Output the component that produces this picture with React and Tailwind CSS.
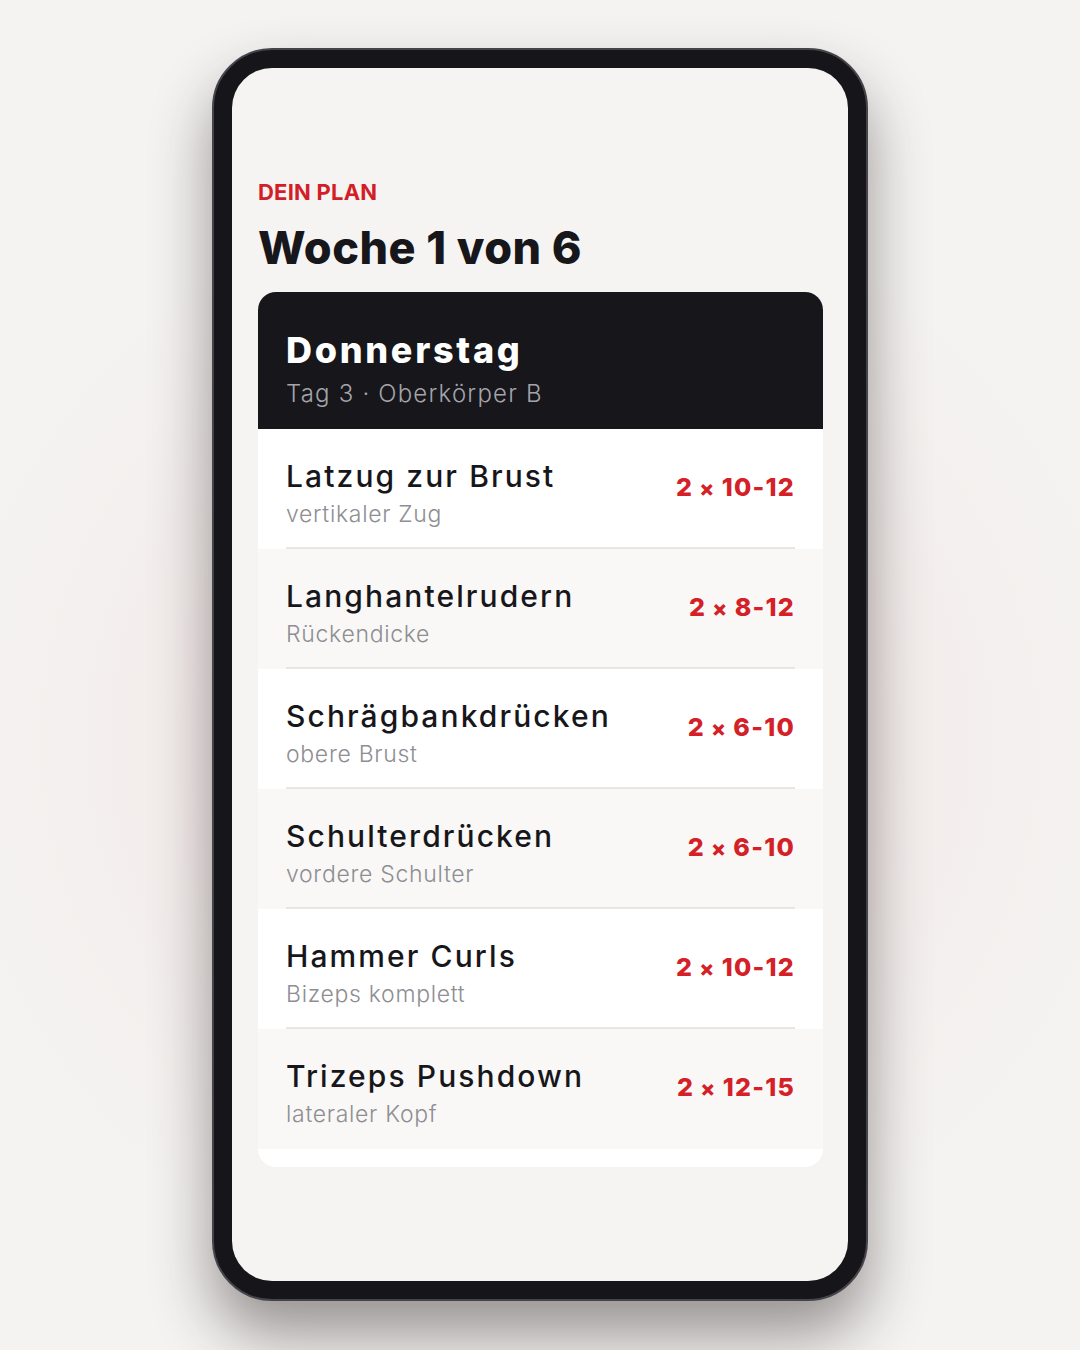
import React from "react";

const rows = [
  { t: "Latzug zur Brust", s: "vertikaler Zug", r: "10-12", bg: "bg-white" },
  { t: "Langhantelrudern", s: "Rückendicke", r: "8-12", bg: "bg-[#f9f8f6]" },
  { t: "Schrägbankdrücken", s: "obere Brust", r: "6-10", bg: "bg-white" },
  { t: "Schulterdrücken", s: "vordere Schulter", r: "6-10", bg: "bg-[#f9f8f6]" },
  { t: "Hammer Curls", s: "Bizeps komplett", r: "10-12", bg: "bg-white" },
  { t: "Trizeps Pushdown", s: "lateraler Kopf", r: "12-15", bg: "bg-[#f9f8f6]" },
];

export default function App() {
  return (
    <div className="w-[1080px] h-[1350px] overflow-hidden bg-[#f4f3f1] bg-[radial-gradient(ellipse_55%_42%_at_50%_55%,#f2e3e3_0%,#f4f3f1_100%)] font-['Inter',sans-serif] pt-[48px]">
      <div className="mx-auto w-[656px] h-[1253px] rounded-[60px] bg-[#16161a] border-2 border-[#44444a] p-[18px] shadow-[0_34px_60px_rgba(40,30,30,0.45)]">
        <div className="h-full rounded-[40px] bg-[#f5f4f2] px-[26px] pr-[25px] pt-[113px]">
          <div className="text-[22px] leading-none font-bold text-[#d21f27] tracking-[0.01em]">DEIN PLAN</div>
          <div className="mt-[22px] text-[45px] leading-none font-extrabold text-[#17171b] tracking-[0.01em]">
            Woche 1 von 6
          </div>
          <div className="mt-[22px] rounded-[18px] bg-white overflow-hidden pb-[18px]">
            <div className="h-[137px] bg-[#16161b] px-[28px] pt-[40px]">
              <div className="text-[36px] leading-none font-extrabold text-white tracking-[0.075em]">
                Donnerstag
              </div>
              <div className="mt-[14px] text-[24px] leading-none font-light text-[#a4a4ab] tracking-[0.05em]">
                Tag 3 · Oberkörper B
              </div>
            </div>
            {rows.map((row, i) => (
              <div key={i} className={`${row.bg} px-[28px] h-[120px]`}>
                <div
                  className={`h-full flex justify-between items-start pt-[32px] ${
                    i < rows.length - 1 ? "border-b-2 border-[#e8e6e3]" : ""
                  }`}
                >
                  <div>
                    <div className="text-[30px] leading-none font-medium text-[#17171b] tracking-[0.07em]">
                      {row.t}
                    </div>
                    <div className="mt-[12px] text-[23px] leading-none font-light text-[#8e8e93] tracking-[0.03em]">
                      {row.s}
                    </div>
                  </div>
                  <div className="mt-[14px] text-[25px] leading-none font-extrabold text-[#d42027] tracking-[0.05em] whitespace-nowrap">
                    2<span className="text-[22px] mx-[6px]">×</span>
                    {row.r}
                  </div>
                </div>
              </div>
            ))}
          </div>
        </div>
      </div>
    </div>
  );
}
